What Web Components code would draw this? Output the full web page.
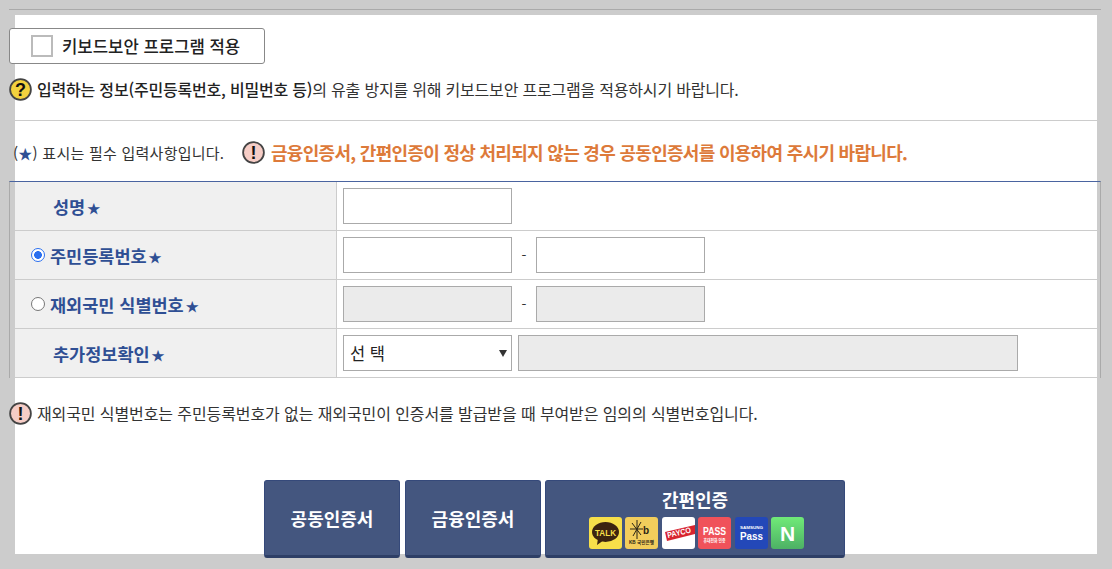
<!DOCTYPE html>
<html lang="ko">
<head>
<meta charset="utf-8">
<title>공동인증서</title>
<style>
html, body {
	margin: 0;
	height: 100%;
	overflow: hidden;
	background: #ccc;
	color: #222;
	font-family: "Noto Sans CJK KR", "Noto Sans", sans-serif;
}
</style>
</head>
<body>
<login-panel>
	<keyboard-toggle>키보드보안 프로그램 적용</keyboard-toggle>
	<info-note kind="help" id="kb"><b>입력하는 정보(주민등록번호, 비밀번호 등)</b>의 유출 방지를 위해 키보드보안 프로그램을 적용하시기 바랍니다.</info-note>
	<required-bar>금융인증서, 간편인증이 정상 처리되지 않는 경우 공동인증서를 이용하여 주시기 바랍니다.</required-bar>
	<form-table>
		<form-row first>
			<field-label slot="label" required>성명</field-label>
			<text-box></text-box>
		</form-row>
		<form-row>
			<field-label slot="label" radio="on" required>주민등록번호</field-label>
			<text-box></text-box>
			<span class="dash">-</span>
			<text-box></text-box>
		</form-row>
		<form-row>
			<field-label slot="label" radio="off" required>재외국민 식별번호</field-label>
			<text-box disabled></text-box>
			<span class="dash">-</span>
			<text-box disabled></text-box>
		</form-row>
		<form-row>
			<field-label slot="label" required>추가정보확인</field-label>
			<select-box>선 택</select-box>
			<text-box disabled wide></text-box>
		</form-row>
	</form-table>
	<info-note kind="warn" id="foreign">재외국민 식별번호는 주민등록번호가 없는 재외국민이 인증서를 발급받을 때 부여받은 임의의 식별번호입니다.</info-note>
	<auth-buttons>
		<auth-button>공동인증서</auth-button>
		<auth-button>금융인증서</auth-button>
		<auth-button wide>간편인증<brand-row slot="brands"></brand-row></auth-button>
	</auth-buttons>
</login-panel>

<script>
const icons = {
	help: `<svg width="23" height="23" viewBox="0 0 23 23"><circle cx="11.5" cy="11.5" r="10.4" fill="#f3d23e" stroke="#444" stroke-width="1.8"/><text x="11.5" y="17.5" text-anchor="middle" font-family="Liberation Sans, sans-serif" font-size="18" font-weight="700" fill="#111">?</text></svg>`,
	warn: `<svg width="23" height="23" viewBox="0 0 23 23"><circle cx="11.5" cy="11.5" r="10.4" fill="#f6cdc6" stroke="#444" stroke-width="1.8"/><text x="11.5" y="17.5" text-anchor="middle" font-family="Liberation Sans, sans-serif" font-size="18" font-weight="700" fill="#111">!</text></svg>`
};

class LoginPanel extends HTMLElement {
	connectedCallback() {
		if (this.shadowRoot) return;
		this.attachShadow({ mode: 'open' }).innerHTML = `
<style>
:host {
	display: block;
	box-sizing: border-box;
	margin: 15px 15px 0;
	height: 539px;
	background: #fff;
}
.inner {
	display: flex;
	flex-direction: column;
	margin: 0 -4px 0 -6px;
}
.rule {
	height: 1px;
	background: #aaa;
	margin-top: -6px;
}
</style>
<div class="inner">
	<div class="rule"></div>
	<slot></slot>
</div>`;
	}
}

class KeyboardToggle extends HTMLElement {
	connectedCallback() {
		if (this.shadowRoot) return;
		this.attachShadow({ mode: 'open' }).innerHTML = `
<style>
:host {
	display: flex;
	align-items: center;
	box-sizing: border-box;
	width: 256px;
	height: 36px;
	margin-top: 18px;
	padding-left: 21px;
	border: 1px solid #888;
	border-radius: 3px;
	background: #fff;
	font-size: 16.7px;
	font-weight: 500;
	color: #222;
}
input {
	appearance: none;
	box-sizing: border-box;
	width: 22px;
	height: 22px;
	margin: 0 9px 0 0;
	border: 2px solid #bbb;
	background: #fff;
}
</style>
<input type="checkbox"><slot></slot>`;
	}
}

class InfoNote extends HTMLElement {
	connectedCallback() {
		if (this.shadowRoot) return;
		const kind = this.getAttribute('kind') || 'warn';
		this.attachShadow({ mode: 'open' }).innerHTML = `
<style>
:host {
	display: flex;
	align-items: center;
	gap: 5px;
	height: 24px;
	font-size: 16px;
	letter-spacing: -0.2px;
	color: #333;
}
:host([kind="help"]) { margin-top: 13px; }
:host([kind="warn"]) { letter-spacing: -0.1px; }
svg { display: block; }
::slotted(b) { font-weight: 500; color: #222; }
</style>
${icons[kind]}<span><slot></slot></span>`;
	}
}

class RequiredBar extends HTMLElement {
	connectedCallback() {
		if (this.shadowRoot) return;
		this.attachShadow({ mode: 'open' }).innerHTML = `
<style>
:host {
	display: flex;
	align-items: center;
	height: 61px;
	margin-top: 19px;
	padding: 2px 0 0 4px;
	border-top: 1px solid #ccc;
	box-sizing: border-box;
}
.hint {
	width: 229px;
	font-size: 15px;
	letter-spacing: 0.25px;
	color: #333;
}
.hint i { font-style: normal; color: #2f4f94; font-weight: 700; font-size: 14px; }
svg { display: block; margin-right: 6px; }
.warn {
	font-size: 18px;
	font-weight: 700;
	letter-spacing: -0.7px;
	color: #dd7a3a;
}
</style>
<span class="hint">(<i>★</i>) 표시는 필수 입력사항입니다.</span>
${icons.warn}
<span class="warn"><slot></slot></span>`;
	}
}

class FormTable extends HTMLElement {
	connectedCallback() {
		if (this.shadowRoot) return;
		this.attachShadow({ mode: 'open' }).innerHTML = `
<style>
:host {
	display: block;
	border-top: 1px solid #4a64a0;
	border-left: 1px solid #aaa;
	border-right: 1px solid #aaa;
	margin-bottom: 23px;
}
</style>
<slot></slot>`;
	}
}

class FormRow extends HTMLElement {
	connectedCallback() {
		if (this.shadowRoot) return;
		this.attachShadow({ mode: 'open' }).innerHTML = `
<style>
:host {
	display: grid;
	grid-template-columns: 327px 1fr;
	height: 49px;
	box-sizing: border-box;
	border-bottom: 1px solid #ccc;
}
.head {
	display: flex;
	align-items: center;
	border-right: 1px solid #ccc;
	background: linear-gradient(to right, #ccc 5px, #f0f0f0 5px);
}
.body {
	display: flex;
	align-items: center;
	padding-left: 6px;
}
::slotted(.dash) {
	width: 24px;
	text-align: center;
	font-size: 14px;
	color: #333;
}
</style>
<div class="head"><slot name="label"></slot></div>
<div class="body"><slot></slot></div>`;
	}
}

class FieldLabel extends HTMLElement {
	connectedCallback() {
		if (this.shadowRoot) return;
		const radio = this.getAttribute('radio');
		const control = radio ? `<input type="radio" name="idtype"${radio === 'on' ? ' checked' : ''}>` : '';
		this.attachShadow({ mode: 'open' }).innerHTML = `
<style>
:host {
	display: flex;
	align-items: center;
	padding-left: ${radio ? 21 : 43}px;
	font-size: 17.5px;
	font-weight: 700;
	color: #2f4f94;
}
input {
	appearance: none;
	box-sizing: border-box;
	width: 14px;
	height: 14px;
	margin: 0 5px 0 0;
	border: 1px solid #777;
	border-radius: 50%;
	background: #fff;
}
input:checked {
	border: 1.5px solid #2a6fef;
	background: radial-gradient(circle, #2a6fef 0 3.6px, #fff 4.1px);
}
.star { margin: 2px 0 0 2px; font-size: 13px; }
</style>
${control}<slot></slot><span class="star">★</span>`;
	}
}

class TextBox extends HTMLElement {
	connectedCallback() {
		if (this.shadowRoot) return;
		const off = this.hasAttribute('disabled');
		this.attachShadow({ mode: 'open' }).innerHTML = `
<style>
:host {
	display: block;
	margin-left: ${this.hasAttribute('wide') ? 6 : 0}px;
}
input {
	display: block;
	box-sizing: border-box;
	width: ${this.hasAttribute('wide') ? 500 : 169}px;
	height: 36px;
	margin: 0;
	border: 1px solid #aaa;
	background: ${off ? '#ebebeb' : '#fff'};
}
</style>
<input type="text"${off ? ' disabled' : ''}>`;
	}
}

class SelectBox extends HTMLElement {
	connectedCallback() {
		if (this.shadowRoot) return;
		this.attachShadow({ mode: 'open' }).innerHTML = `
<style>
:host {
	display: flex;
	align-items: center;
	position: relative;
	box-sizing: border-box;
	width: 169px;
	height: 36px;
	padding-left: 6px;
	border: 1px solid #aaa;
	background: #fff;
	font-size: 16.5px;
	color: #222;
}
.arrow {
	position: absolute;
	right: 4px;
	top: 14px;
	border: 4px solid transparent;
	border-top: 7px solid #333;
	border-bottom: 0;
}
</style>
<slot></slot><span class="arrow"></span>`;
	}
}

class AuthButtons extends HTMLElement {
	connectedCallback() {
		if (this.shadowRoot) return;
		this.attachShadow({ mode: 'open' }).innerHTML = `
<style>
:host {
	display: flex;
	justify-content: flex-start;
	gap: 5px;
	margin-top: 55px;
	padding-left: 255px;
}
</style>
<slot></slot>`;
	}
}

class AuthButton extends HTMLElement {
	connectedCallback() {
		if (this.shadowRoot) return;
		const wide = this.hasAttribute('wide');
		this.attachShadow({ mode: 'open' }).innerHTML = `
<style>
:host {
	display: flex;
	flex-direction: column;
	align-items: center;
	justify-content: center;
	gap: 6px;
	box-sizing: border-box;
	width: ${wide ? 300 : 136}px;
	height: 78px;
	margin-left: ${wide ? -1 : 0}px;
	border: 1px solid #35497a;
	border-bottom: 3px solid #2e3f66;
	border-radius: 3px;
	background: #44567f;
	color: #fff;
	font-size: 18px;
	font-weight: 700;
	line-height: 24px;
}
</style>
<slot></slot><slot name="brands"></slot>`;
	}
}

class BrandRow extends HTMLElement {
	connectedCallback() {
		if (this.shadowRoot) return;
		this.attachShadow({ mode: 'open' }).innerHTML = `
<style>
:host {
	display: flex;
	gap: 3.4px;
	margin-left: 3px;
}
svg { display: block; border-radius: 3px; }
text { font-family: "Liberation Sans", "Noto Sans CJK KR", sans-serif; }
</style>
<svg width="33" height="32" viewBox="0 0 33 32">
	<rect width="33" height="32" fill="#f7df4a"/>
	<ellipse cx="16.5" cy="15" rx="13.5" ry="10" fill="#3c2410"/>
	<path d="M9 21 L8 28 L15 23 Z" fill="#3c2410"/>
	<text x="16.5" y="18.5" text-anchor="middle" font-size="9" font-weight="700" fill="#f7df4a" textLength="21" lengthAdjust="spacingAndGlyphs">TALK</text>
</svg>
<svg width="33" height="32" viewBox="0 0 33 32">
	<rect width="33" height="32" fill="#f2cd5c"/>
	<path d="M7 6 L16 18 M16 5 L8 19 M12 3 V22 M5 12 H18" stroke="#2a2416" stroke-width="1" fill="none"/>
	<text x="21" y="17" text-anchor="middle" font-size="10" fill="#2a2416">b</text>
	<text x="16.5" y="27" text-anchor="middle" font-size="4.6" fill="#2a2416" textLength="25" lengthAdjust="spacingAndGlyphs">KB 국민은행</text>
</svg>
<svg width="33" height="32" viewBox="0 0 33 32">
	<rect width="33" height="32" fill="#fff"/>
	<path d="M3 15 L33 8 V17 L5 24 Z" fill="#d8242f"/>
	<text x="6" y="21" font-size="8" font-weight="700" fill="#fff" textLength="24" lengthAdjust="spacingAndGlyphs" transform="rotate(-13 6 21)">PAYCO</text>
</svg>
<svg width="33" height="32" viewBox="0 0 33 32">
	<rect width="33" height="32" fill="#f0525a"/>
	<text x="16.5" y="18" text-anchor="middle" font-size="11" fill="#fff" textLength="23" lengthAdjust="spacingAndGlyphs">PASS</text>
	<text x="16.5" y="25" text-anchor="middle" font-size="4.4" fill="#fff" textLength="22" lengthAdjust="spacingAndGlyphs">휴대전화 인증</text>
</svg>
<svg width="33" height="32" viewBox="0 0 33 32">
	<rect width="33" height="32" fill="#2348b8"/>
	<text x="16.5" y="12" text-anchor="middle" font-size="3.8" font-weight="700" fill="#fff" textLength="23" lengthAdjust="spacingAndGlyphs">SAMSUNG</text>
	<text x="16.5" y="22.5" text-anchor="middle" font-size="11.5" fill="#fff" textLength="23" lengthAdjust="spacingAndGlyphs">Pass</text>
</svg>
<svg width="33" height="32" viewBox="0 0 33 32">
	<defs><linearGradient id="n" x1="0" y1="0" x2="0" y2="1"><stop offset="0" stop-color="#70ea78"/><stop offset="1" stop-color="#4db165"/></linearGradient></defs>
	<rect width="33" height="32" fill="url(#n)"/>
	<text x="16.5" y="23.5" text-anchor="middle" font-size="21" font-weight="700" fill="#fff">N</text>
</svg>`;
	}
}

window.customElements.define('login-panel', LoginPanel);
window.customElements.define('keyboard-toggle', KeyboardToggle);
window.customElements.define('info-note', InfoNote);
window.customElements.define('required-bar', RequiredBar);
window.customElements.define('form-table', FormTable);
window.customElements.define('form-row', FormRow);
window.customElements.define('field-label', FieldLabel);
window.customElements.define('text-box', TextBox);
window.customElements.define('select-box', SelectBox);
window.customElements.define('auth-buttons', AuthButtons);
window.customElements.define('auth-button', AuthButton);
window.customElements.define('brand-row', BrandRow);
</script>
</body>
</html>
